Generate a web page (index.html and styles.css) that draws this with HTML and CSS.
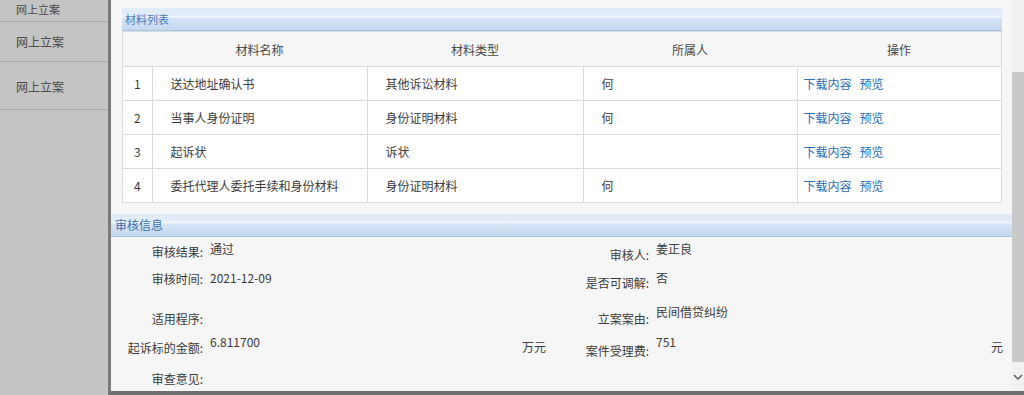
FILE: index.html
```html
<!DOCTYPE html>
<html lang="zh-CN">
<head>
    <meta charset="UTF-8">
    <meta name="viewport" content="width=device-width, initial-scale=1.0">
    <title>网上立案</title>
    <link rel="stylesheet" href="styles.css">
</head>
<body>
    <div class="sidebar">
        <ul class="menu">
            <li class="menu-item first">网上立案</li>
            <li class="menu-item">网上立案</li>
            <li class="menu-item tall">网上立案</li>
        </ul>
    </div>

    <div class="dialog">
        <div class="content">
            <div class="materials">
                <div class="section-title small">材料列表</div>
                <table class="material-table">
                    <tr class="head-row">
                        <th class="col-idx"></th>
                        <th class="col-name">材料名称</th>
                        <th class="col-type">材料类型</th>
                        <th class="col-owner">所属人</th>
                        <th class="col-act">操作</th>
                    </tr>
                    <tr>
                        <td class="idx">1</td>
                        <td>送达地址确认书</td>
                        <td>其他诉讼材料</td>
                        <td>何</td>
                        <td class="act"><a href="#">下载内容</a><a href="#">预览</a></td>
                    </tr>
                    <tr>
                        <td class="idx">2</td>
                        <td>当事人身份证明</td>
                        <td>身份证明材料</td>
                        <td>何</td>
                        <td class="act"><a href="#">下载内容</a><a href="#">预览</a></td>
                    </tr>
                    <tr>
                        <td class="idx">3</td>
                        <td>起诉状</td>
                        <td>诉状</td>
                        <td></td>
                        <td class="act"><a href="#">下载内容</a><a href="#">预览</a></td>
                    </tr>
                    <tr>
                        <td class="idx">4</td>
                        <td>委托代理人委托手续和身份材料</td>
                        <td>身份证明材料</td>
                        <td>何</td>
                        <td class="act"><a href="#">下载内容</a><a href="#">预览</a></td>
                    </tr>
                </table>
            </div>

            <div class="review">
                <div class="section-title">审核信息</div>
                <div class="form-row row-1">
                    <div class="label">审核结果:</div>
                    <div class="value">通过</div>
                    <div class="label right">审核人:</div>
                    <div class="value">姜正良</div>
                </div>
                <div class="form-row row-2">
                    <div class="label">审核时间:</div>
                    <div class="value">2021-12-09</div>
                    <div class="label right">是否可调解:</div>
                    <div class="value">否</div>
                </div>
                <div class="form-row row-3">
                    <div class="label">适用程序:</div>
                    <div class="value"></div>
                    <div class="label">立案案由:</div>
                    <div class="value">民间借贷纠纷</div>
                </div>
                <div class="form-row row-4">
                    <div class="label">起诉标的金额:</div>
                    <div class="value"><span>6.811700</span><span class="unit">万元</span></div>
                    <div class="label right">案件受理费:</div>
                    <div class="value"><span>751</span><span class="unit">元</span></div>
                </div>
                <div class="form-row row-5">
                    <div class="label">审查意见:</div>
                    <div class="value"></div>
                </div>
            </div>
        </div>

        <div class="scrollbar">
            <div class="thumb"></div>
            <div class="arrow">
                <svg width="10" height="7" viewBox="0 0 10 7"><polyline points="1,1 5,5 9,1" fill="none" stroke="#555" stroke-width="1.4"/></svg>
            </div>
        </div>
    </div>
</body>
</html>
```

FILE: styles.css
```css
body{
    margin: 0;
    height: 395px;
    display: flex;
    overflow: hidden;
    font-family: "Noto Sans CJK SC", "Liberation Sans", sans-serif;
    font-size: 12px;
    color: #3c3c3c;
}
.sidebar{
    width: 108px;
    flex-shrink: 0;
    background: #c4c4c4;
    overflow: hidden;
}
.menu{
    list-style: none;
    margin: 0;
    padding: 0;
}
.menu-item{
    height: 39px;
    line-height: 39px;
    padding-left: 16px;
    color: #4a4a4a;
    border-bottom: 1px solid #a9a9a9;
}
.menu-item.first{
    height: 21px;
    line-height: 19px;
    font-size: 11px;
}
.menu-item.tall{
    height: 47px;
    line-height: 50px;
}
.dialog{
    flex: 1;
    display: flex;
    border-left: 3px solid #7a7a7a;
    border-bottom: 4px solid #6e6e6e;
}
.content{
    flex: 1;
    background: #f6f6f6;
    padding-top: 8px;
}
.section-title{
    height: 22px;
    line-height: 22px;
    padding-left: 4px;
    color: #3a6fb0;
    background: linear-gradient(#e2ecf9 0%, #e2ecf9 30%, #f1f6fd 38%, #d6e4f6 48%, #c4d8f0 100%);
    border-bottom: 1px solid #a8c2e3;
}
.section-title.small{
    font-size: 11px;
    padding-left: 3px;
    color: #4a7cb8;
}
.materials{
    margin: 0 10px 0 11px;
}
.material-table{
    width: 880px;
    table-layout: fixed;
    border-collapse: collapse;
    background: #fff;
    border: 1px solid #dcdcdc;
}
.material-table th{
    height: 34px;
    padding: 0;
    font-weight: normal;
    color: #4a4a4a;
    background: #f6f6f6;
    border-bottom: 1px solid #dcdcdc;
}
.material-table td{
    height: 33px;
    padding: 0 0 0 18px;
    border: 1px solid #dcdcdc;
}
.col-idx{ width: 29px; }
.col-name{ width: 215px; }
.col-type{ width: 216px; }
.col-owner{ width: 214px; }
.material-table td.idx{
    padding: 0;
    text-align: center;
}
.material-table td.act{
    padding-left: 6px;
}
.act a{
    color: #2b6db3;
    text-decoration: none;
    margin-right: 8px;
}
.review{
    margin-top: 11px;
}
.form-row{
    display: grid;
    grid-template-columns: 95px 349px 97px 1fr;
    align-items: start;
    line-height: 16px;
}
.label{
    text-align: right;
    padding-right: 3px;
}
.value{
    display: flex;
    justify-content: space-between;
    padding: 0 9px 0 4px;
}
.row-1{ height: 28px; }
.row-1 .label{ padding-top: 7px; }
.row-1 .value{ padding-top: 4px; }
.row-2{ height: 30px; }
.row-2 .label{ padding-top: 6px; }
.row-2 .value{ padding-top: 5px; }
.row-3{ height: 38px; }
.row-3 .label{ padding-top: 16px; }
.row-3 .value{ padding-top: 9px; }
.row-4{ height: 30px; }
.row-4 .label{ padding-top: 7px; }
.row-4 .value{ padding-top: 1px; }
.row-4 .value .unit{ padding-top: 5px; }
.row-5{ height: 27px; }
.row-5 .label{ padding-top: 8px; }
.form-row .label.right{
    padding-top: 10px;
}
.scrollbar{
    width: 12px;
    flex-shrink: 0;
    background: #f1f1f1;
    display: flex;
    flex-direction: column;
    padding-top: 72px;
}
.thumb{
    height: 290px;
    background: #c9c9c9;
}
.arrow{
    display: flex;
    justify-content: center;
    padding-top: 12px;
}
```
